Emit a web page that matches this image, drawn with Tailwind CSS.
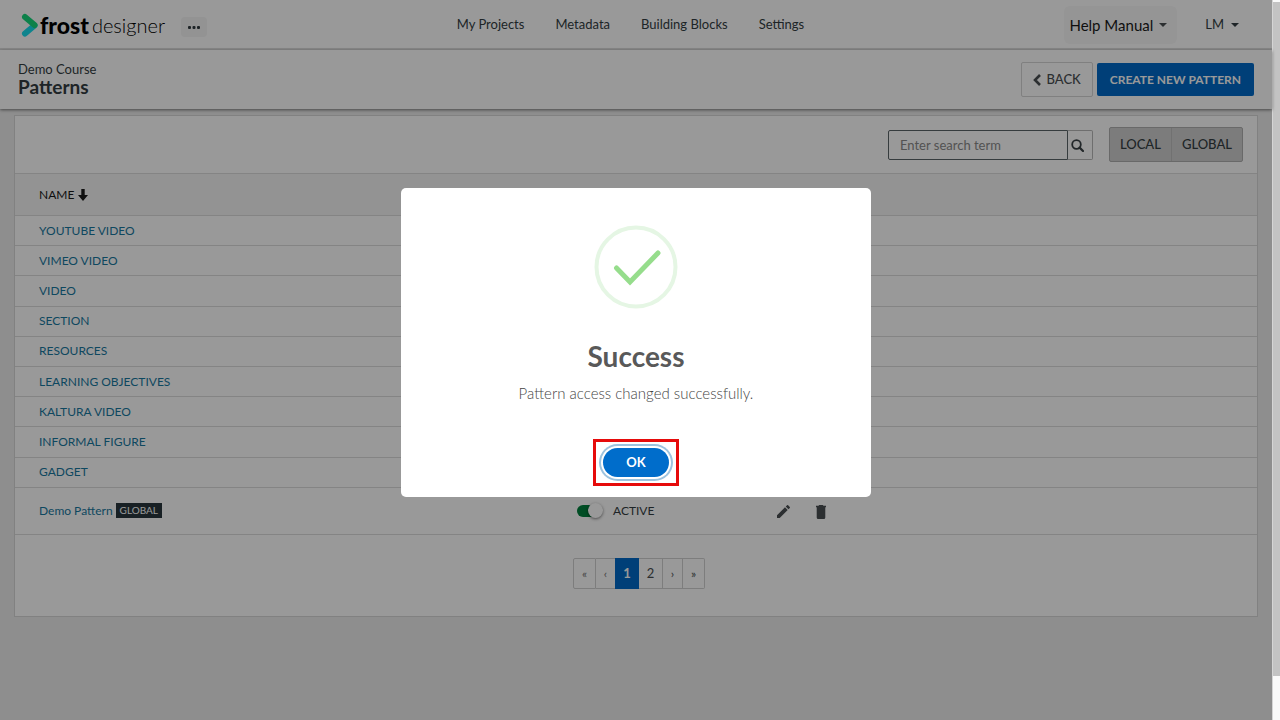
<!DOCTYPE html>
<html lang="en">

<head>
  <meta charset="UTF-8" />
  <meta name="viewport" content="width=device-width, initial-scale=1.0" />
  <title>Patterns - Frost Designer</title>
  <script src="https://cdn.jsdelivr.net/npm/@tailwindcss/browser@4"></script>
</head>

<body class="flex h-screen overflow-hidden bg-[#ededed] font-['Lato',sans-serif] text-[#333d42]">
  <div class="relative flex-1">
    <header class="grid h-[50px] grid-cols-[1fr_auto_1fr] items-center border-b-2 border-[#e0e0e0] bg-white">
      <div class="flex items-center pt-[2px] pl-5">
        <a href="#" class="flex items-center text-black" aria-label="frost designer">
          <svg class="h-6 w-[18px]" viewBox="0 0 18 24" fill="none" stroke-width="6" stroke-linecap="round">
            <path d="M5 20.500L14.500 12.500" stroke="#18dcec" />
            <path d="M5 4L14.500 12" stroke="#16d87c" />
          </svg>
          <span class="pl-[2px] text-[23px] leading-6 font-black">frost</span>
          <span class="pl-[3px] text-xl leading-6 font-light">designer</span>
        </a>
        <button type="button" class="mt-1 ml-4 flex h-5 w-[26px] items-center justify-center rounded-sm bg-[#f5f5f5]" aria-label="More">
          <svg class="h-[3px] w-3" viewBox="0 0 12 3" fill="#333d42">
            <rect x="0" width="3" height="3" rx="1" />
            <rect x="4.500" width="3" height="3" rx="1" />
            <rect x="9" width="3" height="3" rx="1" />
          </svg>
        </button>
      </div>
      <nav class="flex gap-[31px] pt-[2px] pr-[11px] text-[13px]">
        <a href="#">My Projects</a>
        <a href="#">Metadata</a>
        <a href="#">Building Blocks</a>
        <a href="#">Settings</a>
      </nav>
      <div class="flex items-center justify-end pt-[2px] pr-[33px]">
        <button type="button" class="flex h-[38px] items-center gap-[6px] rounded-md bg-[#f8f8f8] pr-[10px] pl-[5px] text-[15px] text-[#1a1a1a]">
          Help Manual
          <svg class="h-1 w-2" viewBox="0 0 8 4" fill="#4a4f52"><path d="M0 0h8L4 4z" /></svg>
        </button>
        <button type="button" class="ml-7 flex items-center gap-[7px] text-[13px]">
          LM
          <svg class="h-1 w-2" viewBox="0 0 8 4" fill="#333d42"><path d="M0 0h8L4 4z" /></svg>
        </button>
      </div>
    </header>

    <div class="relative flex h-[59px] items-center justify-between bg-white px-[18px] shadow-[0_1px_3px_rgba(0,0,0,0.5)]">
      <div class="pb-[3px]">
        <p class="text-[13px] leading-[18px]">Demo Course</p>
        <h1 class="text-[19px] leading-[18px] font-bold">Patterns</h1>
      </div>
      <div class="flex items-center gap-1 font-bold">
        <button type="button" class="flex h-[35px] items-center gap-[5px] rounded-xs border border-[#d5d5d5] px-[11px] text-[13px] font-medium text-[#4a4f52]">
          <svg class="h-3 w-2" viewBox="0 0 8 12" fill="none" stroke="currentColor" stroke-width="2.600"><path d="M7 1L2 6l5 5" /></svg>
          BACK
        </button>
        <button type="button" class="h-[33px] rounded-xs bg-[#006ac8] px-[13px] text-xs text-white">CREATE NEW PATTERN</button>
      </div>
    </div>

    <main class="mx-[14px] mt-[6px] border border-[#d8d8d8] bg-white pb-[27px]">
      <div class="flex h-[57px] items-center justify-end gap-4 pr-[14px]">
        <form class="flex h-[30px]">
          <input type="text" aria-label="Enter search term" placeholder="Enter search term" class="w-[180px] rounded-l-xs border border-[#5a6468] px-[11px] text-[13px] leading-5 placeholder:text-[#8a8a8a]" />
          <button type="button" class="flex w-[25px] items-center justify-center rounded-r-xs border border-l-0 border-[#b8b8b8] pt-[2px] pr-[5px]" aria-label="Search">
            <svg class="h-[13px] w-[13px]" viewBox="0 0 13 13" fill="none" stroke="#3a4246" stroke-width="1.800">
              <circle cx="5.500" cy="5.500" r="4.300" />
              <path d="M8.600 8.600L12 12" stroke-width="2.200" stroke-linecap="round" />
            </svg>
          </button>
        </form>
        <div class="flex h-[35px] rounded-xs border border-[#b0b0b0] bg-[#cfcfcf] text-[13px] font-medium">
          <button type="button" class="border-r border-[#bdbdbd] px-[10px]">LOCAL</button>
          <button type="button" class="px-[10px]">GLOBAL</button>
        </div>
      </div>

      <table class="h-[362px] w-full border-collapse text-left text-xs">
        <thead>
          <tr class="h-[42px] border-y border-[#dcdcdc] bg-[#f6f6f6]">
            <th class="w-[562px] pl-6 font-normal text-[#1a1a1a]">
              <button type="button" class="flex items-center gap-1">
                NAME
                <svg class="h-3 w-[10px]" viewBox="0 0 10 12" fill="#1a1a1a"><path d="M3.300 0h3.400v6H10L5 12 0 6h3.300z" /></svg>
              </button>
            </th>
            <th class="w-[200px]"></th>
            <th></th>
          </tr>
        </thead>
        <tbody id="patterns" class="text-[#1878a0]">
          <tr class="h-[47px] border-b border-[#dcdcdc]">
            <td class="pl-6">
              <div class="flex items-center gap-[3px]">
                <a href="#">Demo Pattern</a>
                <span class="h-[15px] bg-[#28363c] px-1 text-[10px] leading-[15px] text-white">GLOBAL</span>
              </div>
            </td>
            <td>
              <label class="flex items-center gap-[10px] text-[#333d42]">
                <span class="relative flex h-4 w-[26px] items-center">
                  <input type="checkbox" checked class="h-3 w-6 appearance-none rounded-full bg-[#00803c]" />
                  <span class="absolute top-0 right-0 h-[15px] w-[15px] rounded-full bg-white shadow-[0_1px_3px_rgba(0,0,0,0.5)]"></span>
                </span>
                ACTIVE
              </label>
            </td>
            <td>
              <div class="flex gap-[26px] pt-[2px]">
                <button type="button" aria-label="Edit">
                  <svg class="h-[13px] w-[13px]" viewBox="3 3 18 18" fill="#4a4f52"><path d="M3 17.250V21h3.750L17.810 9.940l-3.750-3.750zM20.710 7.040a1 1 0 0 0 0-1.410l-2.340-2.340a1 1 0 0 0-1.410 0l-1.830 1.830 3.750 3.750z" /></svg>
                </button>
                <button type="button" aria-label="Delete">
                  <svg class="h-[14px] w-[10px]" viewBox="5 3 14 18" preserveAspectRatio="none" fill="#4a4f52"><path d="M6 19a2 2 0 0 0 2 2h8a2 2 0 0 0 2-2V6H6zM19 4h-3.500l-1-1h-5l-1 1H5v2h14z" /></svg>
                </button>
              </div>
            </td>
          </tr>
        </tbody>
      </table>

      <nav class="mt-[23px] flex h-[31px] justify-center pl-[6px] text-[13px] text-[#4a4f52]" aria-label="Pages">
        <a href="#" class="flex w-[23px] items-center justify-center rounded-l-xs border border-[#d0d0d0] text-xs text-[#777777]">«</a>
        <a href="#" class="flex w-[19px] items-center justify-center border-y border-[#d0d0d0] text-xs text-[#777777]">‹</a>
        <a href="#" class="flex w-6 items-center justify-center bg-[#006ac8] font-bold text-white">1</a>
        <a href="#" class="flex w-6 items-center justify-center border-y border-r border-[#d0d0d0]">2</a>
        <a href="#" class="flex w-5 items-center justify-center border-y border-r border-[#d0d0d0] text-xs">›</a>
        <a href="#" class="flex w-[22px] items-center justify-center rounded-r-xs border-y border-r border-[#d0d0d0] text-xs">»</a>
      </nav>
    </main>

    <div class="absolute inset-0 flex items-start justify-center bg-black/40 pt-[188px]">
      <div role="dialog" aria-labelledby="dialogTitle" class="flex w-[470px] flex-col items-center rounded-[5px] bg-white pt-[37px] pb-[11px]">
        <svg class="h-[84px] w-[84px]" viewBox="0 0 84 84" fill="none">
          <circle cx="42" cy="42" r="39.500" stroke="#e5f6e4" stroke-width="4" />
          <path d="M22.500 43L36 57L64 28" stroke="#96dd8c" stroke-width="5" stroke-linecap="round" />
        </svg>
        <h2 id="dialogTitle" class="mt-[29px] text-[28px] leading-9 font-bold text-[#595959]">Success</h2>
        <p class="mt-[9px] text-[15px] leading-5 font-light text-[#454545]">Pattern access changed successfully.</p>
        <div class="mt-9 border-3 border-[#e60b0b] px-[7px] py-[6px]">
          <button type="button" class="block h-[29px] w-[66px] rounded-full bg-[#006dcb] text-[13px] font-bold text-white shadow-[0_0_0_2px_#ffffff,0_0_0_4px_#9dc3df]">OK</button>
        </div>
      </div>
    </div>
  </div>

  <div class="w-2 border-l border-[#d5d5d5] bg-[#fafafa] pt-[2px]">
    <div class="h-[674px] bg-[#c3c3c3]"></div>
  </div>

  <script>
    const names = [
      "YOUTUBE VIDEO", "VIMEO VIDEO", "VIDEO", "SECTION", "RESOURCES",
      "LEARNING OBJECTIVES", "KALTURA VIDEO", "INFORMAL FIGURE", "GADGET"
    ];
    const patterns = document.getElementById("patterns");
    const rows = names.map(name => `
      <tr class="h-[30px] border-b border-[#dcdcdc]">
        <td class="pl-6"><a href="#">${name}</a></td>
        <td></td>
        <td></td>
      </tr>`).join("");
    patterns.insertAdjacentHTML("afterbegin", rows);
  </script>
</body>

</html>
